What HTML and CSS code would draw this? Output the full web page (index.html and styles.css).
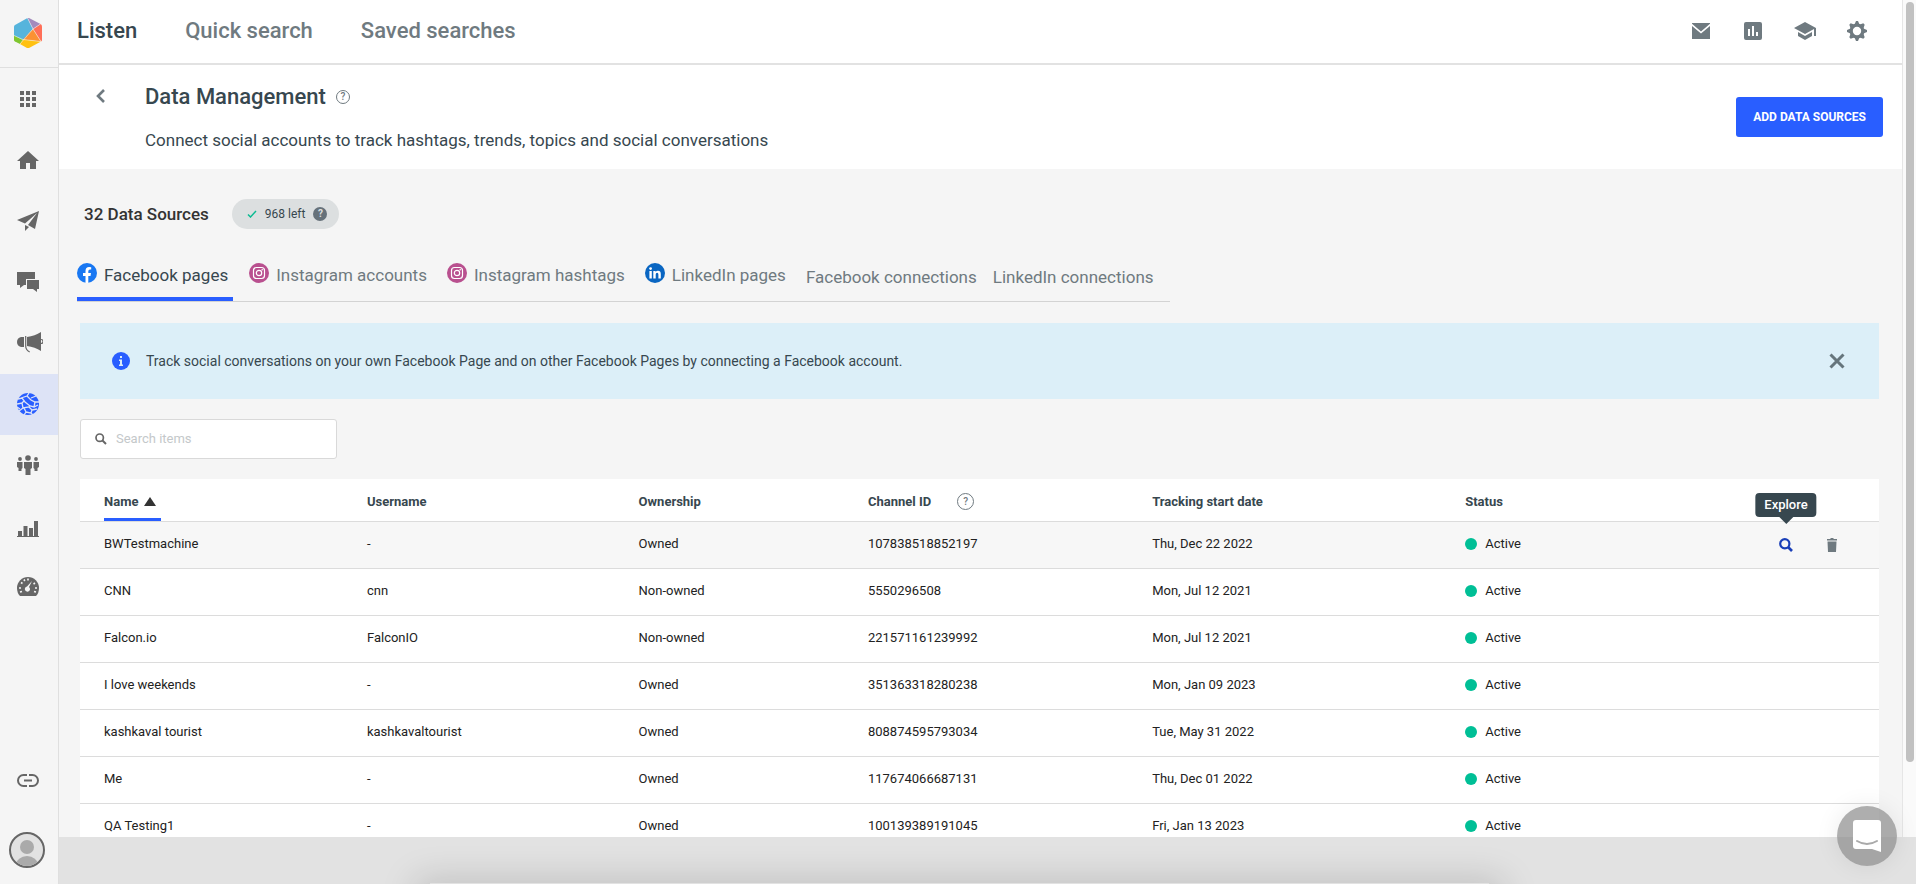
FILE: index.html
```html
<!DOCTYPE html>
<html lang="en">
<head>
  <title>Data Management</title>
  <meta charset="utf-8">
  <meta name="viewport" content="width=device-width, initial-scale=1.0">
  <link rel="stylesheet" href="styles.css">
</head>
<body>
  <div class="app">
    <nav class="sidebar" aria-label="Main">
      <a href="#" class="logo" aria-label="Home page">
        <svg width="28" height="30" viewBox="0 0 28 30">
          <path d="M13.500 0L1 7q-1 .6-1 2v8.500L9 22l10-11z" fill="#56b4dc"/>
          <path d="M0 17.500V22q0 1 1 1.500L6 26l3-4z" fill="#7fc62f"/>
          <path d="M13.500 0h1.500L26.500 6 19 11z" fill="#a48bbd"/>
          <path d="M26.500 6Q28 6.800 28 8.500V22q0 1-1 1.500L19 11z" fill="#ff6f58"/>
          <path d="M19 11l8 12.500L9 21.500z" fill="#fb9133"/>
          <path d="M9 21.500l18 2L15 30h-2l-7-4z" fill="#ffc110"/>
          <path d="M13.500 0L19 11l8 12.500M26.500 6L19 11 6 26M0 17.500l9 4 18 2" fill="none" stroke="#f5f5f5" stroke-width=".5"/>
        </svg>
      </a>
      <div class="menu">
        <a href="#" class="menu-item" aria-label="Apps">
          <svg width="16" height="16" viewBox="0 0 16 16"><path d="M0 0h4v4H0zM6 0h4v4H6zM12 0h4v4h-4zM0 6h4v4H0zM6 6h4v4H6zM12 6h4v4h-4zM0 12h4v4H0zM6 12h4v4H6zM12 12h4v4h-4z"/></svg>
        </a>
        <a href="#" class="menu-item" aria-label="Home">
          <svg width="22" height="18" viewBox="0 0 22 18"><path d="M11 0l11 10h-3v8h-6v-6H9v6H3v-8H0z"/></svg>
        </a>
        <a href="#" class="menu-item" aria-label="Publish">
          <svg width="22" height="20" viewBox="0 0 22 20"><path d="M22 0l-4 18-7-4L20 2 8 12.500 0 9zM8 14l4 2-4 4z"/></svg>
        </a>
        <a href="#" class="menu-item" aria-label="Engage">
          <svg width="22" height="20" viewBox="0 0 22 20"><path d="M0 0h18v7H9v6H7l-4 3v-3H0zM10 8h12v9h-2v3l-4-3h-6z"/></svg>
        </a>
        <a href="#" class="menu-item" aria-label="Advertise">
          <svg width="26" height="22" viewBox="0 0 26 22"><path d="M4 5h3v10H4q-4-1-4-5t4-5zM10 5q8-1 14-5v19q-6-4-14-5z"/><path d="M8.700 4v10q0 4 4 6M24 7.500q2 0 2 2t-2 2" fill="none" stroke="#666" stroke-width="1.200"/></svg>
        </a>
        <a href="#" class="menu-item active" aria-label="Listen">
          <svg width="22" height="22" viewBox="0 0 22 22"><circle cx="11" cy="11" r="11"/><path d="M1 6l4-1 3 4 5 4 4 1 4-2M4 5l6-2 2-3M10 3l4 4 4 2h4M14 5l5-2M0 11l5-1 1 5 6-1 1-2M5 10l2-2M6 15l-4 3M7 15l2 4-2 3M9 19l5 1 2 2M12 14l3 3-1 3M15 17l5-1M17 14l1-5M0 14l3 2" fill="none" stroke="#dde3f6" stroke-width="1.300"/></svg>
        </a>
        <a href="#" class="menu-item" aria-label="Audience">
          <svg width="22" height="20" viewBox="0 0 22 20"><circle cx="11" cy="3" r="2.800"/><circle cx="3" cy="4" r="1.900"/><circle cx="19" cy="4" r="1.900"/><path d="M7 7h8v6l-1.500 1v6h-5v-6L7 13zM0 7h5.500v6l-1 1v2h-3v-3L0 12zM16.500 7H22v5l-1.500 1v3h-3v-2l-1-1z"/></svg>
        </a>
        <a href="#" class="menu-item" aria-label="Measure">
          <svg width="22" height="22" viewBox="0 -6 22 22"><path d="M0 15h22v1H0zM1 10h4v5H1zM6.500 5h4v10h-4zM12 7h4v8h-4zM17 0h4v15h-4z"/></svg>
        </a>
        <a href="#" class="menu-item" aria-label="Benchmark">
          <svg width="22" height="19" viewBox="0 0 22 19"><path d="M11 0a11 11 0 0 1 11 11q0 5-3 8H3q-3-3-3-8A11 11 0 0 1 11 0z"/><path d="M15 4l-3 6a2.600 2.600 0 1 1-2-.5z" fill="#f5f5f5"/><path d="M2 11h2M18 11h2M4 5.500l1.500 1M7 2.500l.8 1.500M11 1.500v2M18 6l-1.500 1M3 15l2-.5M19 15l-2-.5" stroke="#f5f5f5" stroke-width="1.600"/></svg>
        </a>
      </div>
      <a href="#" class="menu-item link" aria-label="Links">
        <svg width="22" height="13" viewBox="0 0 22 13"><path d="M10 1H6.500a5.500 5.500 0 0 0 0 11H10M12 1h3.500a5.500 5.500 0 0 1 0 11H12M7 6.500h8" fill="none" stroke="#666" stroke-width="2"/></svg>
      </a>
      <a href="#" class="avatar" aria-label="Profile">
        <svg width="32" height="32" viewBox="0 0 32 32"><circle cx="16" cy="13" r="7"/><ellipse cx="16" cy="31" rx="11" ry="9"/></svg>
      </a>
    </nav>

    <div class="content">
      <main class="main">
        <header class="topbar">
          <nav class="topnav">
            <a href="#" class="current">Listen</a>
            <a href="#">Quick search</a>
            <a href="#">Saved searches</a>
          </nav>
          <div class="tools">
            <button aria-label="Messages"><svg width="18" height="16" viewBox="0 0 18 16"><path d="M0 0h18v.7L9 8.500 0 .7zM0 3l9 7.500L18 3v13H0z"/></svg></button>
            <button aria-label="Reports"><svg width="18" height="18" viewBox="0 0 18 18"><path fill-rule="evenodd" d="M2 0h14a2 2 0 0 1 2 2v14a2 2 0 0 1-2 2H2a2 2 0 0 1-2-2V2a2 2 0 0 1 2-2zM4 7v7h2V7zM8 4v10h2V4zM12 10v4h2v-4z"/></svg></button>
            <button aria-label="Academy"><svg width="22" height="18" viewBox="0 0 22 18"><path d="M11 0l11 6v8h-2V7l-9 5L0 6zM4 10l7 4 7-4v4l-7 4-7-4z"/></svg></button>
            <button aria-label="Settings"><svg width="20" height="20" viewBox="0 0 20 20"><circle cx="10" cy="10" r="5.800" fill="none" stroke="#6f7a80" stroke-width="3.200"/><path d="M7.500 3.500L9 0h2l1.500 3.500zM7.500 16.500L9 20h2l1.500-3.500zM3.500 7.500L0 9v2l3.500 1.500zM16.500 7.500L20 9v2l-3.500 1.500zM3.600 7.200L2.300 3.700l1.400-1.400 3.500 1.300zM12.800 3.600l3.500-1.300 1.400 1.400-1.300 3.500zM3.600 12.800l-1.300 3.500 1.400 1.400 3.500-1.300zM16.400 12.800l1.300 3.500-1.400 1.400-3.500-1.300z"/></svg></button>
          </div>
        </header>

        <section class="page-head">
          <button class="back" aria-label="Back"><svg width="10" height="14" viewBox="0 0 10 14"><path d="M8 1L2 7l6 6" fill="none" stroke="#6f7a80" stroke-width="2.600"/></svg></button>
          <div class="page-title">
            <h1>Data Management <span class="help">?</span></h1>
            <p>Connect social accounts to track hashtags, trends, topics and social conversations</p>
          </div>
          <button class="add">ADD DATA SOURCES</button>
        </section>

        <div class="summary">
          <h2>32 Data Sources</h2>
          <span class="quota">
            <svg width="10" height="8" viewBox="0 0 10 8"><path d="M1 4.500L3.500 7 9 1" fill="none" stroke="#0cbb92" stroke-width="1.500"/></svg>
            968 left
            <b class="q">?</b>
          </span>
        </div>

        <nav class="tabs">
          <a href="#" class="tab selected">
            <svg width="20" height="20" viewBox="0 0 20 20"><circle cx="10" cy="10" r="10" fill="#1877f2"/><path d="M8.500 20v-7H6v-3h2.500V8q0-4 3.700-4l2 .2v2.400H13q-1.700 0-1.700 1.700V10H14l-.5 3h-2.200v7z" fill="#fff"/></svg>
            Facebook pages
          </a>
          <a href="#" class="tab">
            <svg width="20" height="20" viewBox="0 0 20 20"><circle cx="10" cy="10" r="10" fill="#b9508f"/><rect x="4.500" y="4.500" width="11" height="11" rx="3" fill="none" stroke="#fff" stroke-width="1.200"/><circle cx="10" cy="10" r="2.700" fill="none" stroke="#fff" stroke-width="1.200"/><circle cx="13.200" cy="6.800" r=".8" fill="#fff"/></svg>
            Instagram accounts
          </a>
          <a href="#" class="tab">
            <svg width="20" height="20" viewBox="0 0 20 20"><circle cx="10" cy="10" r="10" fill="#b9508f"/><rect x="4.500" y="4.500" width="11" height="11" rx="3" fill="none" stroke="#fff" stroke-width="1.200"/><circle cx="10" cy="10" r="2.700" fill="none" stroke="#fff" stroke-width="1.200"/><circle cx="13.200" cy="6.800" r=".8" fill="#fff"/></svg>
            Instagram hashtags
          </a>
          <a href="#" class="tab">
            <svg width="20" height="20" viewBox="0 0 20 20"><circle cx="10" cy="10" r="10" fill="#0a66c2"/><circle cx="5.600" cy="5.600" r="1.400" fill="#fff"/><path d="M4.400 8h2.400v7.500H4.400zM8.300 8h2.300v1q.8-1.200 2.400-1.200 2.800 0 2.800 3.200v4.500h-2.400v-4q0-1.700-1.300-1.700-1.400 0-1.400 1.700v4H8.300z" fill="#fff"/></svg>
            LinkedIn pages
          </a>
          <a href="#" class="tab plain">Facebook connections</a>
          <a href="#" class="tab plain">LinkedIn connections</a>
        </nav>

        <div class="notice">
          <svg width="18" height="18" viewBox="0 0 18 18"><circle cx="9" cy="9" r="9" fill="#295eff"/><path d="M8 4h2v2H8zM7 7.500h3v5h1V14H7v-1.500h1V9H7z" fill="#dcedf7"/></svg>
          <p>Track social conversations on your own Facebook Page and on other Facebook Pages by connecting a Facebook account.</p>
          <button aria-label="Close"><svg width="16" height="16" viewBox="0 0 16 16"><path d="M1.500 1.500l13 13M14.500 1.500l-13 13" stroke="#66757c" stroke-width="3"/></svg></button>
        </div>

        <label class="search">
          <svg width="12" height="12" viewBox="0 0 12 12"><circle cx="4.700" cy="4.700" r="3.700" fill="none" stroke="#666" stroke-width="1.700"/><path d="M7.500 7.500L11 11" stroke="#666" stroke-width="2"/></svg>
          <input type="text" placeholder="Search items" aria-label="Search items">
        </label>

        <table class="sources">
          <colgroup>
            <col class="c-name"><col class="c-user"><col class="c-owner"><col class="c-id"><col class="c-date"><col class="c-status"><col class="c-actions">
          </colgroup>
          <thead>
            <tr>
              <th><span class="sorted">Name <svg width="12" height="9" viewBox="0 0 12 9"><path d="M6 0l6 9H0z"/></svg></span></th>
              <th>Username</th>
              <th>Ownership</th>
              <th><span class="with-help">Channel ID <span class="help">?</span></span></th>
              <th>Tracking start date</th>
              <th>Status</th>
              <th></th>
            </tr>
          </thead>
          <tbody>
            <tr class="hovered">
              <td>BWTestmachine</td><td>-</td><td>Owned</td><td>107838518852197</td><td>Thu, Dec 22 2022</td><td><span class="status">Active</span></td>
              <td>
                <div class="actions">
                  <button class="explore" aria-label="Explore">
                    <svg width="14" height="14" viewBox="0 0 14 14"><circle cx="5.800" cy="5.800" r="4.600" fill="none" stroke="#1a3fb8" stroke-width="2.200"/><path d="M9 9l4 4" stroke="#1a3fb8" stroke-width="2.600"/></svg>
                    <span class="tooltip">Explore</span>
                  </button>
                  <button aria-label="Delete"><svg width="10" height="14" viewBox="0 0 10 14"><path d="M0 1h3l1-1h2l1 1h3v1.500H0zM.5 3.500h9L9 14H1z" fill="#6f7a80"/></svg></button>
                </div>
              </td>
            </tr>
            <tr><td>CNN</td><td>cnn</td><td>Non-owned</td><td>5550296508</td><td>Mon, Jul 12 2021</td><td><span class="status">Active</span></td><td></td></tr>
            <tr><td>Falcon.io</td><td>FalconIO</td><td>Non-owned</td><td>221571161239992</td><td>Mon, Jul 12 2021</td><td><span class="status">Active</span></td><td></td></tr>
            <tr><td>I love weekends</td><td>-</td><td>Owned</td><td>351363318280238</td><td>Mon, Jan 09 2023</td><td><span class="status">Active</span></td><td></td></tr>
            <tr><td>kashkaval tourist</td><td>kashkavaltourist</td><td>Owned</td><td>808874595793034</td><td>Tue, May 31 2022</td><td><span class="status">Active</span></td><td></td></tr>
            <tr><td>Me</td><td>-</td><td>Owned</td><td>117674066687131</td><td>Thu, Dec 01 2022</td><td><span class="status">Active</span></td><td></td></tr>
            <tr><td>QA Testing1</td><td>-</td><td>Owned</td><td>100139389191045</td><td>Fri, Jan 13 2023</td><td><span class="status">Active</span></td><td></td></tr>
          </tbody>
        </table>
      </main>
      <div class="scrollbar"><div class="thumb"></div></div>
      <footer class="bottom"></footer>
    </div>
  </div>

  <button class="chat" aria-label="Open chat">
    <svg width="28" height="32" viewBox="0 0 28 32"><path d="M3 0h22a3 3 0 0 1 3 3v29l-9-3H3a3 3 0 0 1-3-3V3a3 3 0 0 1 3-3z" fill="#fff"/><path d="M4 21q10 6 20 0" fill="none" stroke="#aaa" stroke-width="2" stroke-linecap="round"/></svg>
  </button>
</body>
</html>
```
FILE: styles.css
```css
* {
  box-sizing: border-box;
}

body {
  margin: 0;
  font-family: Roboto, "Liberation Sans", sans-serif;
  font-size: 14px;
  line-height: 20px;
  color: #37474f;
  background: #f5f5f5;
  overflow: hidden;
}

a {
  color: inherit;
  text-decoration: none;
}

button {
  display: flex;
  align-items: center;
  justify-content: center;
  padding: 0;
  border: 0;
  background: none;
  font: inherit;
  cursor: pointer;
}

svg {
  flex: none;
}

h1, h2, p {
  margin: 0;
}

.app {
  display: flex;
  height: 100vh;
}

/* sidebar */
.sidebar {
  display: flex;
  flex-direction: column;
  width: 59px;
  border-right: 1px solid #dfdfdf;
}

.logo {
  display: flex;
  align-items: center;
  height: 68px;
  padding-left: 14px;
  padding-bottom: 2px;
  border-bottom: 1px solid #dfdfdf;
}

.menu {
  flex: 1;
  padding-top: 1px;
}

.menu-item {
  display: flex;
  align-items: center;
  height: 61px;
  padding-left: 17px;
  padding-bottom: 2px;
  fill: #666;
}

.menu-item:first-child {
  padding-left: 20px;
}

.menu-item.active {
  background: #dde3f6;
  fill: #295eff;
}

.menu-item.link {
  padding-bottom: 0;
}

.avatar {
  width: 36px;
  height: 36px;
  margin: 21px 9px 16px;
  border: 2px solid #666;
  border-radius: 50%;
  background: #e2e2e2;
  fill: #aaa;
  overflow: hidden;
}

/* layout */
.content {
  flex: 1;
  display: grid;
  grid-template-columns: 1fr 14px;
  grid-template-rows: 1fr 47px;
  min-width: 0;
}

.main {
  overflow: hidden;
  min-height: 0;
}

.scrollbar {
  padding: 2px 2px 0 3px;
  border-left: 1px solid #e6e6e6;
  background: #fafafa;
}

.thumb {
  height: 91%;
  border-radius: 4px;
  background: #c1c1c1;
}

.bottom {
  display: flex;
  align-items: flex-end;
  grid-column: 1 / 3;
  padding: 0 23% 0 20%;
  background: #e2e2e2;
  overflow: hidden;
}

.bottom::after {
  content: "";
  flex: 1;
  height: 1px;
  box-shadow: 0 12px 36px 14px rgba(0, 0, 0, 0.18);
}

/* top bar */
.topbar {
  display: flex;
  align-items: center;
  justify-content: space-between;
  height: 65px;
  padding: 0 35px 2px 18px;
  border-bottom: 2px solid #e2e2e2;
  background: #fff;
}

.topnav {
  display: flex;
  gap: 48px;
  font-size: 22px;
  font-weight: 500;
  line-height: 28px;
  color: #6f7a80;
}

.topnav .current {
  color: #37474f;
}

.tools {
  display: flex;
  gap: 32px;
  fill: #6f7a80;
}

.tools button {
  width: 20px;
  height: 20px;
  fill: inherit;
}

/* page header */
.page-head {
  display: flex;
  align-items: flex-start;
  height: 104px;
  padding: 18px 19px 0 36px;
  background: #fff;
}

.back {
  width: 12px;
  height: 26px;
}

.page-title {
  flex: 1;
  padding-left: 38px;
}

h1 {
  display: flex;
  align-items: center;
  gap: 10px;
  font-size: 22px;
  font-weight: 500;
  line-height: 28px;
}

.page-title p {
  margin-top: 18px;
  font-size: 17px;
  line-height: 22px;
}

.help {
  display: flex;
  align-items: center;
  justify-content: center;
  width: 14px;
  height: 14px;
  border: 1px solid #6f7a80;
  border-radius: 50%;
  font-size: 10px;
  font-weight: 500;
  color: #6f7a80;
}

.add {
  height: 40px;
  margin-top: 14px;
  padding: 0 17px;
  border-radius: 3px;
  background: #295eff;
  font-size: 12px;
  font-weight: 700;
  color: #fff;
}

/* summary */
.summary {
  display: flex;
  align-items: center;
  gap: 23px;
  padding: 30px 25px 0;
}

h2 {
  font-size: 17px;
  font-weight: 500;
  color: #333;
}

.quota {
  display: flex;
  align-items: center;
  gap: 8px;
  height: 30px;
  padding: 0 12px 0 15px;
  border-radius: 15px;
  background: #dcdfe0;
  font-size: 12px;
}

.q {
  width: 14px;
  height: 14px;
  border-radius: 50%;
  background: #66717a;
  font-size: 10px;
  line-height: 14px;
  text-align: center;
  color: #dcdfe0;
}

/* tabs */
.tabs {
  display: flex;
  width: fit-content;
  height: 73px;
  margin-left: 18px;
  padding-right: 16px;
  border-bottom: 1px solid #d3d3d3;
  font-size: 17px;
  line-height: 22px;
  color: #6f7a80;
}

.tab {
  display: flex;
  align-items: flex-start;
  gap: 7px;
  height: 72px;
  margin-right: 16px;
  padding: 35px 4px 0 0;
}

.tab svg {
  margin-top: -1px;
}

.tab.plain {
  margin-right: 0;
  padding: 37px 16px 0 0;
}

.tab.plain:last-child {
  padding-right: 0;
}

.tab.selected {
  padding-right: 5px;
  border-bottom: 4px solid #295eff;
  color: #37474f;
}

/* notice */
.notice {
  display: flex;
  align-items: center;
  height: 76px;
  margin: 21px 23px 0 21px;
  padding: 0 34px 0 32px;
  background: #dceff8;
}

.notice p {
  flex: 1;
  padding-left: 16px;
}

/* search */
.search {
  display: flex;
  align-items: center;
  gap: 9px;
  width: 257px;
  height: 40px;
  margin: 20px 0 20px 21px;
  padding: 0 14px;
  border: 1px solid #d9d9d9;
  border-radius: 3px;
  background: #fff;
}

.search input {
  width: 100%;
  border: 0;
  padding: 0;
  outline: 0;
  font: inherit;
  font-size: 13px;
}

.search input::placeholder {
  color: #c4c8ca;
}

/* table */
.sources {
  width: calc(100% - 44px);
  margin-left: 21px;
  border-collapse: separate;
  border-spacing: 0;
  table-layout: fixed;
  background: #fff;
  font-size: 13px;
  color: #222;
}

.c-name { width: 15.95%; }
.c-user { width: 15.1%; }
.c-owner { width: 12.75%; }
.c-id { width: 15.8%; }
.c-date { width: 17.4%; }
.c-status { width: 12%; }

.sources th,
.sources td {
  height: 47px;
  padding: 0 0 2px;
  border-bottom: 1px solid #dcdcdc;
  text-align: left;
}

.sources th {
  height: 43px;
  padding: 3px 0 0;
  font-weight: 700;
  color: #37474f;
}

.sources th:first-child,
.sources td:first-child {
  padding-left: 24px;
}

.sources th:first-child {
  padding-top: 0;
}

.sorted {
  display: flex;
  align-items: center;
  gap: 6px;
  width: fit-content;
  height: 42px;
  padding: 6px 5px 0 0;
  border-bottom: 3px solid #295eff;
  fill: #333;
}

.with-help {
  display: flex;
  align-items: center;
  gap: 26px;
}

.with-help .help {
  width: 17px;
  height: 17px;
}

.hovered {
  background: #f7f7f7;
}

.status {
  display: flex;
  align-items: center;
  gap: 8px;
}

.status::before {
  content: "";
  width: 12px;
  height: 12px;
  border-radius: 50%;
  background: #00bf96;
}

.actions {
  display: flex;
  justify-content: flex-end;
  gap: 34px;
  padding: 2px 42px 0 0;
}

.explore {
  position: relative;
}

.tooltip {
  position: absolute;
  bottom: 35px;
  left: 50%;
  transform: translateX(-50%);
  padding: 2px 9px;
  border-radius: 4px;
  background: #37474f;
  font-size: 13px;
  font-weight: 500;
  color: #fff;
}

.tooltip::after {
  content: "";
  position: absolute;
  top: 100%;
  left: 50%;
  margin-left: -7px;
  border: 7px solid transparent;
  border-bottom: 0;
  border-top-color: #37474f;
}

/* chat launcher */
.chat {
  position: fixed;
  right: 19px;
  bottom: 18px;
  width: 60px;
  height: 60px;
  border-radius: 50%;
  background: rgba(140, 140, 140, 0.7);
  box-shadow: 0 0 24px rgba(0, 0, 0, 0.08);
}
```
